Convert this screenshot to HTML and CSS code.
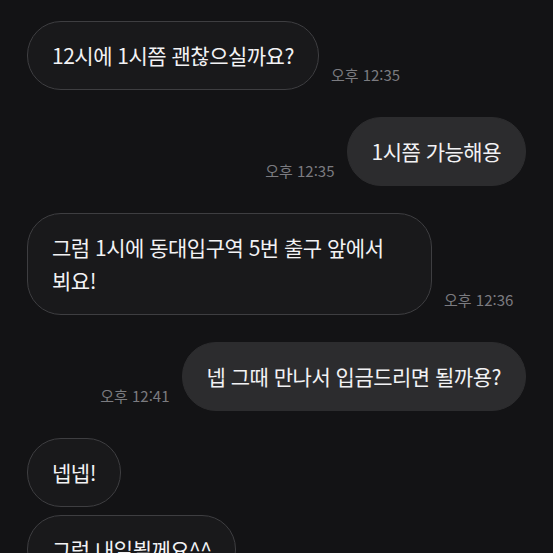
FILE: index.html
```html
<!DOCTYPE html>
<html lang="ko">
  <head>
    <meta charset="utf-8">
    <title>채팅</title>
    <link rel="stylesheet" href="styles.css">
  </head>
  <body>
    <div class="chat">
      <div class="row in">
        <div class="bubble">12시에 1시쯤 괜찮으실까요?</div>
        <span class="time">오후 12:35</span>
      </div>
      <div class="row out">
        <span class="time">오후 12:35</span>
        <div class="bubble">1시쯤 가능해용</div>
      </div>
      <div class="row in">
        <div class="bubble">그럼 1시에 동대입구역 5번 출구 앞에서 뵈요!</div>
        <span class="time">오후 12:36</span>
      </div>
      <div class="row out">
        <span class="time">오후 12:41</span>
        <div class="bubble">넵 그때 만나서 입금드리면 될까용?</div>
      </div>
      <div class="group">
        <div class="row in">
          <div class="bubble">넵넵!</div>
        </div>
        <div class="row in">
          <div class="bubble">그럼 내일뵐께요^^</div>
        </div>
      </div>
    </div>
  </body>
</html>
```

FILE: styles.css
```css
body {
  margin: 0;
  padding: 0;
  background-color: #131315;
  font-family: "Noto Sans CJK KR", "Noto Sans", sans-serif;
  color: #f2f2f4;
  overflow: hidden;
}
.chat {
  display: flex;
  flex-direction: column;
  gap: 27px;
  padding: 21px 27px 0 27px;
}
.group {
  display: flex;
  flex-direction: column;
  gap: 8px;
}
.row {
  display: flex;
  align-items: flex-end;
  gap: 12px;
}
.row.out {
  justify-content: flex-end;
}
.bubble {
  max-width: 355px;
  padding: 17px 24px;
  font-size: 21px;
  line-height: 33px;
  letter-spacing: -0.5px;
  word-break: keep-all;
  border-radius: 34px;
}
.in .bubble {
  background-color: #19191b;
  border: 1px solid #3e3e41;
}
.out .bubble {
  background-color: #2c2c2e;
  border: 1px solid #2c2c2e;
}
.time {
  font-size: 15px;
  line-height: 20px;
  color: #7b7b80;
  padding-bottom: 5px;
  white-space: nowrap;
}
```
